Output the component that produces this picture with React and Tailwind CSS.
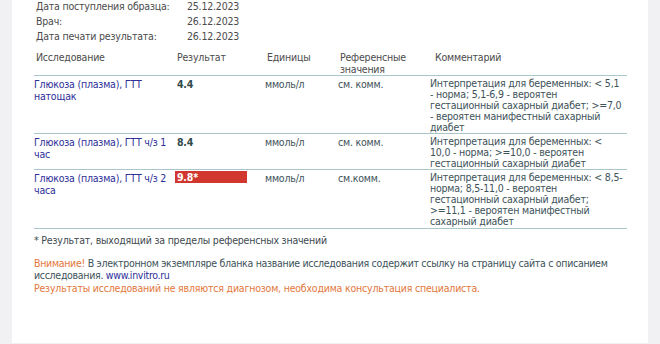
import React from 'react'

const font = "font-['DejaVu_Sans_Condensed','DejaVu_Sans',sans-serif] font-stretch-condensed"

const rows = [
  {
    name: ['Глюкоза (плазма), ГТТ', 'натощак'],
    result: '4.4',
    units: 'ммоль/л',
    ref: 'см. комм.',
    comment: [
      'Интерпретация для беременных: < 5,1',
      '- норма; 5,1-6,9 - вероятен',
      'гестационный сахарный диабет; >=7,0',
      '- вероятен манифестный сахарный',
      'диабет',
    ],
  },
  {
    name: ['Глюкоза (плазма), ГТТ ч/з 1', 'час'],
    result: '8.4',
    units: 'ммоль/л',
    ref: 'см. комм.',
    comment: [
      'Интерпретация для беременных: <',
      '10,0 - норма; >=10,0 - вероятен',
      'гестационный сахарный диабет',
    ],
  },
  {
    name: ['Глюкоза (плазма), ГТТ ч/з 2', 'часа'],
    result: '9.8*',
    flagged: true,
    units: 'ммоль/л',
    ref: 'см.комм.',
    comment: [
      'Интерпретация для беременных: < 8,5-',
      'норма; 8,5-11,0 - вероятен',
      'гестационный сахарный диабет;',
      '>=11,1 - вероятен манифестный',
      'сахарный диабет',
    ],
  },
]

const cols = 'grid grid-cols-[141px_90px_73px_92px_197px]'

const App = () => {
  return (
    <div className={`h-[344px] overflow-hidden bg-[#f1f1f4] px-[12px] ${font}`}>
      <div className="h-full bg-white pl-[22px] pr-[21px] text-[10.5px] tracking-[-0.2px]">
        {/* Sample info */}
        <div className="-mt-[1px] grid grid-cols-[151px_1fr] pl-[2px] leading-[15px] text-[#4b4b4b]">
          <span>Дата поступления образца:</span>
          <span>25.12.2023</span>
          <span>Врач:</span>
          <span>26.12.2023</span>
          <span>Дата печати результата:</span>
          <span>26.12.2023</span>
        </div>

        {/* Table header */}
        <div className={`${cols} mt-[7px] border-b border-[#a9c6ca] leading-[12px] text-[#4b4b4b]`}>
          <span className="pl-[2px]">Исследование</span>
          <span className="pl-[2px]">Результат</span>
          <span className="pl-[2px]">Единицы</span>
          <span className="pl-[2px]">Референсные<br />значения</span>
          <span className="pl-[5px]">Комментарий</span>
        </div>

        {/* Rows */}
        {rows.map((r, i) => (
          <div key={i} className={`${cols} border-b border-[#a9c6ca] ${i === 2 ? 'pb-px' : ''}`}>
            <div className="whitespace-nowrap pt-[2px] leading-[12px] text-[#2e2e98]">
              {r.name[0]}
              <br />
              {r.name[1]}
            </div>
            <div className="leading-[12px]">
              {r.flagged ? (
                <div className="mt-[1px] h-[12px] w-[72px] bg-[#d1372f] pl-[2px] font-bold text-white">
                  {r.result}
                </div>
              ) : (
                <div className="pt-[2px] pl-[2px] font-bold text-[#2f4a4a]">{r.result}</div>
              )}
            </div>
            <div className="pt-[2px] leading-[12px] text-[#3e5259]">{r.units}</div>
            <div className="pt-[2px] leading-[12px] text-[#3e5259]">{r.ref}</div>
            <div className="whitespace-nowrap pt-[2px] leading-[11px] text-[#3e5259]">
              {r.comment.map((line, j) => (
                <div key={j}>{line}</div>
              ))}
            </div>
          </div>
        ))}

        {/* Footer notes */}
        <div className="pt-[5px] leading-[12px] text-[#3e4a4f]">
          * Результат, выходящий за пределы референсных значений
        </div>
        <div className="mt-[11px] whitespace-nowrap leading-[12px] tracking-[-0.3px] text-[#3e5259]">
          <span className="text-[#e3783d]">Внимание!</span> В электронном экземпляре бланка название исследования содержит ссылку на страницу сайта с описанием
          <br />
          исследования. <a href="#" className="text-[#2e2e98]">www.invitro.ru</a>
        </div>
        <div className="mt-[1px] leading-[12px] text-[#e3783d]">
          Результаты исследований не являются диагнозом, необходима консультация специалиста.
        </div>
      </div>
    </div>
  )
}

export default App
